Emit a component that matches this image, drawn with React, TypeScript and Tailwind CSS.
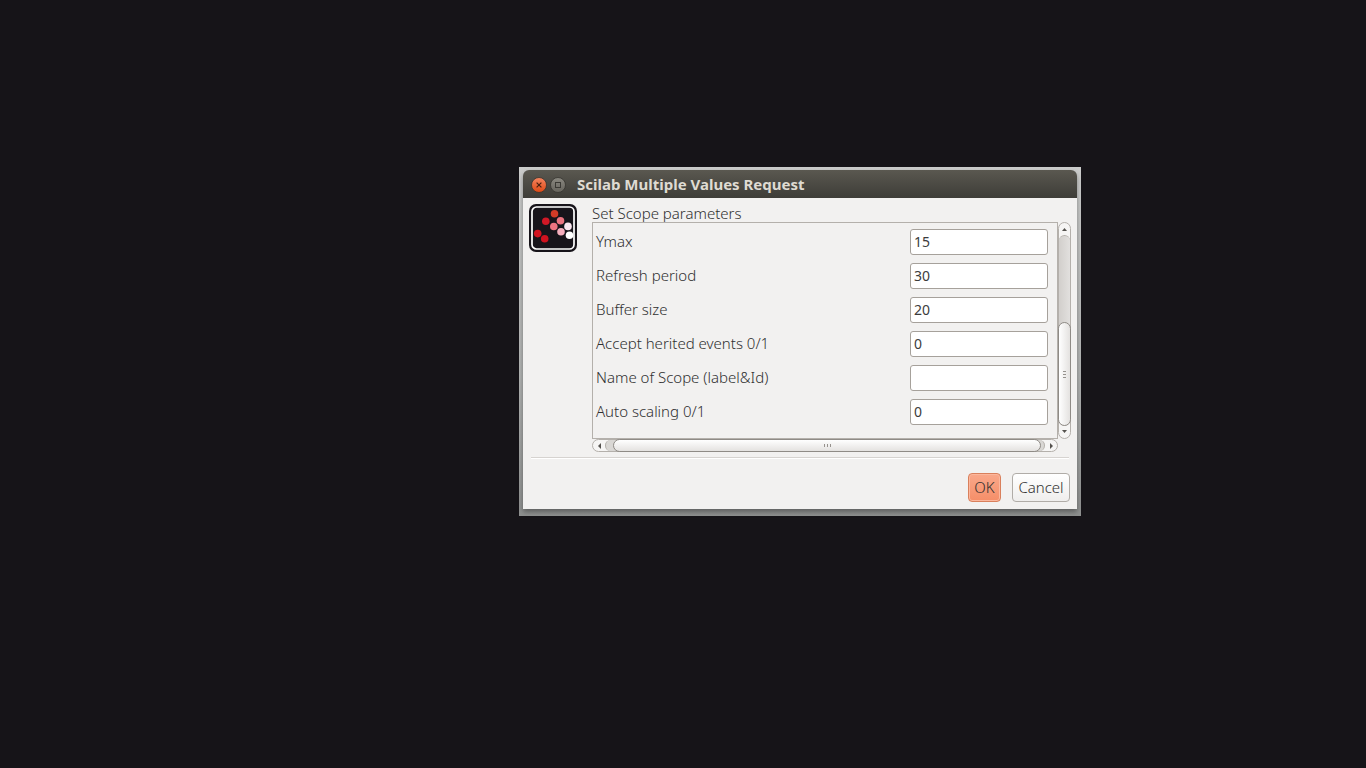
import { useState } from 'react';

type Field = { id: string; label: string; value: string };

const FIELDS: Field[] = [
  { id: 'ymax', label: 'Ymax', value: '15' },
  { id: 'refresh', label: 'Refresh period', value: '30' },
  { id: 'buffer', label: 'Buffer size', value: '20' },
  { id: 'events', label: 'Accept herited events 0/1', value: '0' },
  { id: 'name', label: 'Name of Scope (label&Id)', value: '' },
  { id: 'scaling', label: 'Auto scaling 0/1', value: '0' },
];

const DOTS: [number, number, string][] = [
  [25.5, 9.8, '#d33b27'],
  [16.8, 17.2, '#d01826'],
  [31.5, 16.8, '#ec7480'],
  [24.8, 22.5, '#ec7480'],
  [39, 22.4, '#fbe6ef'],
  [32, 27.7, '#f6aebd'],
  [40.5, 31.2, '#ffffff'],
  [8.7, 29.6, '#d0121f'],
  [15.7, 34.8, '#d0121f'],
];

function ScopeLogo() {
  return (
    <svg className="size-12 shrink-0" viewBox="0 0 48 48" aria-hidden="true">
      <rect width="48" height="48" rx="7" fill="#17141a" />
      <rect x="3" y="3" width="42" height="42" rx="4.5" fill="none" stroke="#ffffff" strokeWidth="1.7" />
      {DOTS.map(([cx, cy, fill]) => (
        <circle key={`${cx}-${cy}`} cx={cx} cy={cy} r="3.8" fill={fill} />
      ))}
    </svg>
  );
}

function TitleBar() {
  return (
    <header className="flex h-7 items-center rounded-t-md bg-linear-to-b from-[#5a5850] to-[#3e3d38] pt-px pl-2">
      <button type="button" aria-label="Close" className="mr-[3px] size-4">
        <svg className="size-4" viewBox="0 0 16 16">
          <defs>
            <linearGradient id="close" x2="0" y2="1">
              <stop stopColor="#f58560" />
              <stop offset="1" stopColor="#dd4814" />
            </linearGradient>
          </defs>
          <circle cx="8" cy="8" r="7.5" fill="url(#close)" stroke="#35342f" strokeWidth="0.8" />
          <path d="M5.6 5.6l4.8 4.8M10.4 5.6l-4.8 4.8" stroke="#4a2010" strokeWidth="1.2" />
        </svg>
      </button>
      <button type="button" aria-label="Maximize" className="size-4">
        <svg className="size-4" viewBox="0 0 16 16">
          <defs>
            <linearGradient id="maximize" x2="0" y2="1">
              <stop stopColor="#8a8880" />
              <stop offset="1" stopColor="#65635c" />
            </linearGradient>
          </defs>
          <circle cx="8" cy="8" r="7.5" fill="url(#maximize)" stroke="#35342f" strokeWidth="0.8" />
          <rect x="5.5" y="5.5" width="5" height="5" fill="none" stroke="#3a3934" />
        </svg>
      </button>
      <h1 className="ml-[11px] font-['Noto_Sans','Open_Sans',sans-serif] text-[15px] font-bold text-[#dfdbd2]">
        Scilab Multiple Values Request
      </h1>
    </header>
  );
}

function VerticalScrollbar() {
  return (
    <div className="flex w-[13px] flex-col rounded-full border border-[#b4b0ab] bg-[#f6f5f4]">
      <button type="button" aria-label="Scroll up" className="flex h-3 items-center justify-center">
        <svg className="h-[3px] w-[5px]" viewBox="0 0 5 3"><path d="M0 3L2.5 0 5 3z" fill="#55524e" /></svg>
      </button>
      <div className="flex grow flex-col justify-end rounded-full border-t border-[#b4b0ab] bg-linear-to-r from-[#d2cfcc] to-[#e2e0de]">
        <div className="-mx-px flex h-[104px] flex-col items-center justify-center gap-[2px] rounded-full border border-[#8f8b86] bg-linear-to-r from-white to-[#e4e2e0]">
          <span className="h-px w-[3px] bg-[#96928d]" />
          <span className="h-px w-[3px] bg-[#96928d]" />
          <span className="h-px w-[3px] bg-[#96928d]" />
        </div>
      </div>
      <button type="button" aria-label="Scroll down" className="flex h-3 items-center justify-center pb-px">
        <svg className="h-[3px] w-[5px]" viewBox="0 0 5 3"><path d="M0 0h5L2.5 3z" fill="#55524e" /></svg>
      </button>
    </div>
  );
}

function HorizontalScrollbar() {
  return (
    <div className="mr-[13px] flex h-[13px] rounded-full border border-[#b4b0ab] bg-[#f6f5f4]">
      <button type="button" aria-label="Scroll left" className="flex w-3 items-center justify-center">
        <svg className="h-[6px] w-[3px]" viewBox="0 0 3 6"><path d="M3 0v6L0 3z" fill="#55524e" /></svg>
      </button>
      <div className="flex grow rounded-full border-x border-[#b4b0ab] bg-[#d9d7d4] pr-[3px] pl-[7px]">
        <div className="-my-px flex grow items-center justify-center gap-[2px] rounded-full border border-[#8f8b86] bg-linear-to-b from-white to-[#e4e2e0]">
          <span className="h-[3px] w-px bg-[#96928d]" />
          <span className="h-[3px] w-px bg-[#96928d]" />
          <span className="h-[3px] w-px bg-[#96928d]" />
        </div>
      </div>
      <button type="button" aria-label="Scroll right" className="flex w-3 items-center justify-center">
        <svg className="h-[6px] w-[3px]" viewBox="0 0 3 6"><path d="M0 0v6l3-3z" fill="#55524e" /></svg>
      </button>
    </div>
  );
}

export default function App() {
  const [values, setValues] = useState<Record<string, string>>(
    Object.fromEntries(FIELDS.map((f) => [f.id, f.value])),
  );

  return (
    <main className="relative min-h-screen bg-[#161418] font-['Noto_Sans','Open_Sans',sans-serif] text-[15px] font-light text-[#303030]">
      <div className="absolute top-[167px] left-[519px] w-[562px] bg-linear-to-b from-[#cbcccb] from-0% via-[#b0b2b1] via-60% to-[#8e908f] to-100% px-1 pt-[3px] pb-[7px]">
        <section aria-label="Scilab Multiple Values Request" className="rounded-t-md shadow-[0_3px_5px_rgba(0,0,0,0.35)]">
          <TitleBar />
          <form className="bg-[#f2f1f0] pt-1.5 pb-[7px]" onSubmit={(e) => e.preventDefault()}>
            <div className="flex gap-[15px] px-1.5">
              <ScopeLogo />
              <div className="grow">
                <h2 className="h-[18px] leading-[18px]">Set Scope parameters</h2>
                <div className="flex">
                  <div className="flex grow flex-col gap-2 border border-[#b4b0ab] pt-1.5 pr-[9px] pb-[13px] pl-[3px]">
                    {FIELDS.map((f) => (
                      <div key={f.id} className="flex h-[26px] items-center justify-between">
                        <label htmlFor={f.id} className="leading-6 pb-[2px]">{f.label}</label>
                        <input
                          id={f.id}
                          className="h-[26px] w-[138px] rounded-[3px] border border-[#a6a19b] bg-white px-[3px] pb-px text-sm font-normal text-[#3c3c3c] outline-none"
                          value={values[f.id]}
                          onChange={(e) => setValues({ ...values, [f.id]: e.target.value })}
                        />
                      </div>
                    ))}
                  </div>
                  <VerticalScrollbar />
                </div>
                <HorizontalScrollbar />
              </div>
            </div>
            <hr className="mx-2 mt-[5px] h-[2px] border-t border-b border-t-[#d6d3d0] border-b-white" />
            <div className="mt-3.5 flex items-center justify-end gap-[11px] pr-[7px]">
              <button type="submit" className="h-[29px] w-[33px] rounded border border-[#d9805c] bg-linear-to-b from-[#f9a88a] to-[#f58e68] shadow-[inset_0_0_0_1px_#fbb79d]">
                OK
              </button>
              <button type="button" className="h-[29px] w-[58px] rounded border border-[#b0aca7] bg-linear-to-b from-white to-[#efeeed]">
                Cancel
              </button>
            </div>
          </form>
        </section>
      </div>
    </main>
  );
}
